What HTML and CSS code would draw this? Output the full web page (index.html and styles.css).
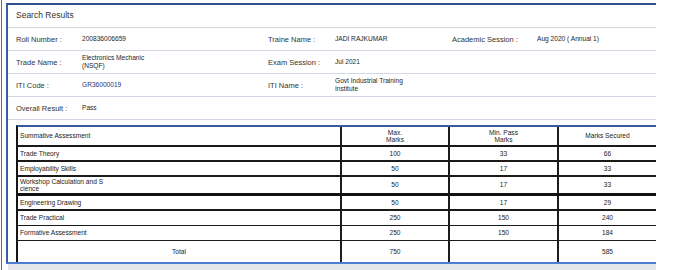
FILE: index.html
```html
<!DOCTYPE html>
<html>
<head>
<meta charset="utf-8">
<link rel="stylesheet" href="styles.css">
</head>
<body>
<div class="frame">
  <div class="card">
    <div class="card-head">Search Results</div>
    <div class="info">
      <span class="lbl">Roll Number :</span><span class="val">200836006659</span>
      <span class="lbl">Traine Name :</span><span class="val">JADI RAJKUMAR</span>
      <span class="lbl">Academic Session :</span><span class="val">Aug 2020 ( Annual 1)</span>
    </div>
    <div class="info">
      <span class="lbl">Trade Name :</span><span class="val">Electronics Mechanic<br>(NSQF)</span>
      <span class="lbl">Exam Session :</span><span class="val">Jul 2021</span>
      <span class="lbl"></span><span class="val"></span>
    </div>
    <div class="info">
      <span class="lbl">ITI Code :</span><span class="val code">GR36000019</span>
      <span class="lbl">ITI Name :</span><span class="val">Govt Industrial Training<br>Institute</span>
      <span class="lbl"></span><span class="val"></span>
    </div>
    <div class="info">
      <span class="lbl">Overall Result :</span><span class="val">Pass</span>
      <span class="lbl"></span><span class="val"></span>
      <span class="lbl"></span><span class="val"></span>
    </div>
    <div class="marks">
      <div class="mrow head b2">
        <div class="c first">Summative Assessment</div>
        <div class="c">Max.<br>Marks</div>
        <div class="c">Min. Pass<br>Marks</div>
        <div class="c last">Marks Secured</div>
      </div>
      <div class="mrow b2">
        <div class="c first">Trade Theory</div><div class="c">100</div><div class="c">33</div><div class="c last">66</div>
      </div>
      <div class="mrow b2">
        <div class="c first">Employability Skills</div><div class="c">50</div><div class="c">17</div><div class="c last">33</div>
      </div>
      <div class="mrow b3 tall">
        <div class="c first">Workshop Calculation and S<br>cience</div><div class="c">50</div><div class="c">17</div><div class="c last">33</div>
      </div>
      <div class="mrow b2">
        <div class="c first">Engineering Drawing</div><div class="c">50</div><div class="c">17</div><div class="c last">29</div>
      </div>
      <div class="mrow b1">
        <div class="c first">Trade Practical</div><div class="c">250</div><div class="c">150</div><div class="c last">240</div>
      </div>
      <div class="mrow b1">
        <div class="c first">Formative Assessment</div><div class="c">250</div><div class="c">150</div><div class="c last">184</div>
      </div>
      <div class="mrow total">
        <div class="c center">Total</div><div class="c">750</div><div class="c"></div><div class="c last">585</div>
      </div>
    </div>
  </div>
  <div class="below"></div>
</div>
</body>
</html>
```

FILE: styles.css
```css
html, body {
  margin: 0;
  padding: 0;
  background: #ffffff;
}

body {
  font-family: "Liberation Sans", Arial, sans-serif;
  color: #333333;
}

.frame {
  margin-left: 1px;
  border-left: 1px solid #4a6db0;
  padding: 3px 0 0 4px;
  height: 270px;
  box-sizing: border-box;
}

.card {
  width: 650px;
  box-sizing: border-box;
  border-left: 2px solid #3a5ea6;
  border-top: 2px solid #2e4e8e;
  border-bottom: 2px solid #4a7ecf;
  background: #ffffff;
}

.card-head {
  height: 22px;
  line-height: 21px;
  padding-left: 8px;
  font-size: 8.5px;
  color: #333333;
  border-bottom: 1px solid #d4d9e2;
}

.info {
  display: grid;
  grid-template-columns: 66px 186px 67px 117px 85px 1fr;
  align-items: center;
  height: 22px;
  padding-left: 8px;
  border-bottom: 1px solid #d4d8e6;
}

.lbl {
  font-size: 7.5px;
  color: #333333;
  white-space: nowrap;
}

.val {
  font-size: 6.6px;
  line-height: 8.5px;
  color: #1e1e1e;
  white-space: nowrap;
}

.val.code {
  color: #27357a;
}

.marks {
  margin: 5px 0 0 8px;
  width: 640px;
  border-top: 2px solid #38599c;
  border-left: 2px solid #151515;
  box-sizing: border-box;
}

.mrow {
  display: grid;
  grid-template-columns: 324px 108px 109px 1fr;
  height: 15px;
  box-sizing: border-box;
  font-size: 6.6px;
  line-height: 7.5px;
  color: #222222;
}

.mrow.head { height: 20px; }
.mrow.tall { height: 19px; }
.mrow.total { height: 21px; }

.mrow.b1 { border-bottom: 1px solid #1a1a1a; }
.mrow.b2 { border-bottom: 2px solid #1a1a1a; }
.mrow.b3 { border-bottom: 3px solid #111111; }

.c {
  display: flex;
  align-items: center;
  justify-content: center;
  text-align: center;
  border-right: 2px solid #1c1c1c;
  box-sizing: border-box;
}

.c.first {
  justify-content: flex-start;
  text-align: left;
  padding-left: 2px;
}

.c.last {
  border-right: none;
}

.below {
  width: 648px;
  margin-left: 2px;
  height: 6px;
  background: #e4e6ea;
}
```
